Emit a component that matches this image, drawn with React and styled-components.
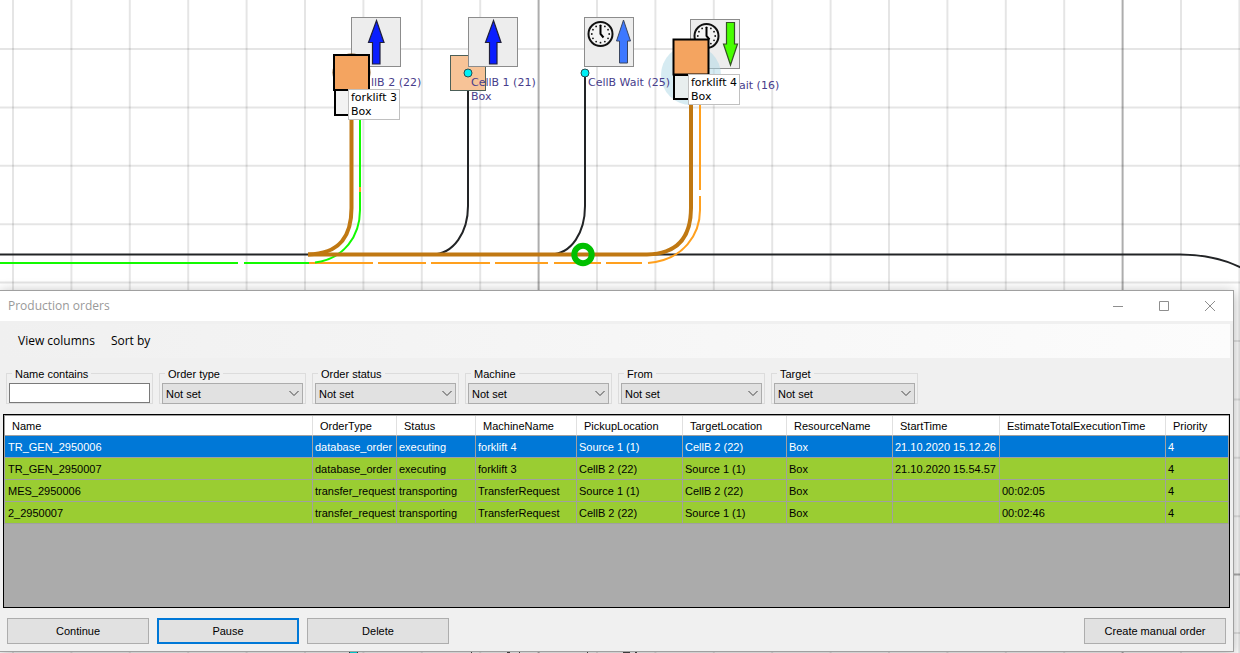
import React, { useState } from "react";
import styled, { createGlobalStyle, css } from "styled-components";

const uiFont = '"Liberation Sans", Arial, sans-serif';
const titleFont = '"Open Sans", "Noto Sans", sans-serif';
const mapFont = '"DejaVu Sans", Verdana, sans-serif';

const GlobalStyle = createGlobalStyle`
  * { box-sizing: border-box; }
  html, body, #root { height: 100%; }
  body { margin: 0; overflow: hidden; background: #fff; font: 11px/14px ${uiFont}; color: #000; }
  button, input, select { font: inherit; color: inherit; }
`;

const Desktop = styled.main`
  position: relative;
  height: 100%;
  overflow: hidden;
`;

/* ---------- plant map ---------- */

const MapCanvas = styled.div`
  position: absolute;
  inset: 0;
  font: 11px/14px ${mapFont};
`;

const MapDrawing = styled.svg`
  display: block;
  width: 100%;
  height: 100%;
`;

const MapLabel = styled.div`
  position: absolute;
  left: ${(p) => p.$x}px;
  top: ${(p) => p.$y}px;
  white-space: pre;
  color: #483d8b;
`;

const VehicleTag = styled(MapLabel)`
  padding: 1px 2px 0;
  border: 1px solid #c0c0c0;
  background: #fff;
  color: #000;
`;

const PITCH = 58.4;
const verticals = Array.from({ length: 40 }, (_, i) => 13 + i * PITCH);
const horizontals = Array.from({ length: 24 }, (_, i) => -9.4 + i * PITCH);

function Grid() {
  return (
    <g stroke="#000" strokeWidth="2">
      {verticals.map((x, i) => (
        <line key={`v${i}`} x1={x} x2={x} y1="0" y2="1400" strokeOpacity={i % 10 === 9 ? 0.32 : 0.1} />
      ))}
      {horizontals.map((y, i) => (
        <line key={`h${i}`} x1="0" x2="2600" y1={y} y2={y} strokeOpacity={i % 10 === 0 && i > 0 ? 0.32 : 0.1} />
      ))}
    </g>
  );
}

function Tile({ x, y, children }) {
  return (
    <g transform={`translate(${x} ${y})`}>
      <rect x="0.5" y="0.5" width="49" height="49" fill="#ededed" stroke="#8c8c8c" />
      {children}
    </g>
  );
}

function BlueArrow() {
  return <path d="M25.500 3.500L33 25.500H29V47H21.500V25.500H17.500Z" fill="#0a1eff" stroke="#20203c" strokeWidth="1.200" />;
}

function Clock() {
  const ticks = Array.from({ length: 12 }, (_, i) => (i * Math.PI) / 6);
  return (
    <g>
      <circle cx="16.500" cy="17" r="12" fill="#f4f4f4" stroke="#111" strokeWidth="2" />
      {ticks.map((a) => (
        <circle key={a} cx={16.5 + 8.7 * Math.sin(a)} cy={17 - 8.7 * Math.cos(a)} r="0.900" fill="#111" />
      ))}
      <path d="M16.500 8V17L19.500 20.500" fill="none" stroke="#000" strokeWidth="2" />
    </g>
  );
}

function PlantMap() {
  return (
    <MapCanvas>
      <MapDrawing aria-hidden="true">
        <Grid />
        <g fill="none" stroke="#222426" strokeWidth="2">
          <path d="M0 254.500H1180C1206 254.500 1226 260 1242 268" />
          <path d="M468 74V206C468 232 454 254 432 254.500" />
          <path d="M585 74V206C585 232 572 254 550 254.500" />
        </g>
        <path d="M314 263H373M378 263H426M431 263H490M495 263H548M554 263H601M606 263H642M648 263C684 260 700 234 700 210V196M700 190V100" fill="none" stroke="#ffa01e" strokeWidth="2" />
        <path d="M309 263H315M360 192V187" stroke="#ff9a1e" strokeWidth="2" />
        <path d="M0 263H238M244 263H309M315 262.500C344 259 360 236 360 210V192M360 187V110" fill="none" stroke="#12fa00" strokeWidth="2" />
        <path d="M308 254.500H647C679 254 691 236 691 208V90" fill="none" stroke="#c07812" strokeWidth="4" />
        <path d="M308 254.500C340 254 351.500 236 351.500 208V90" fill="none" stroke="#c07812" strokeWidth="4" />
        <circle cx="583" cy="254.500" r="8.700" fill="none" stroke="#00c000" strokeWidth="6" />

        <rect x="450.500" y="55.500" width="35" height="35" fill="#f7c397" stroke="#4c5f58" />

        <Tile x={351} y={17}><BlueArrow /></Tile>
        <Tile x={468} y={17}><BlueArrow /></Tile>
        <Tile x={584} y={17}>
          <Clock />
          <path d="M39.500 3L46.500 24H43.500V46H35.500V24H32.500Z" fill="#3d78ff" stroke="#3a4660" strokeWidth="1" />
        </Tile>
        <Tile x={690} y={19}>
          <Clock />
          <path d="M36.500 3.500H44.500V25H47.500L40.500 46L33.500 25H36.500Z" fill="#48ff00" stroke="#335522" strokeWidth="1.200" />
        </Tile>
        <circle cx="691" cy="75" r="30" fill="#add8e6" fillOpacity="0.500" />

        <g fill="#00f0f5" stroke="#2a4c50">
          <circle cx="468" cy="73" r="4" />
          <circle cx="585" cy="73" r="4" />
          <rect x="349.500" y="645.500" width="8" height="8" />
        </g>
        <g fill="#4a4a4a">
          <rect x="471" y="650" width="1" height="12" />
          <rect x="507" y="650" width="3" height="12" />
          <rect x="519" y="650" width="1" height="12" />
          <rect x="587" y="650" width="1" height="12" />
          <rect x="623" y="650" width="7" height="12" />
          <rect x="635" y="650" width="2" height="12" />
        </g>

        <circle cx="351.500" cy="72.500" r="19" fill="#7a4a10" />
        <g stroke="#000" strokeWidth="2">
          <rect x="335" y="90" width="32" height="25" fill="#f2f2f2" />
          <rect x="334" y="55" width="35" height="35" fill="#f4a460" />
          <rect x="674" y="75" width="32" height="24" fill="#e8eeee" />
          <rect x="673.500" y="39.500" width="35" height="35" fill="#f4a460" />
        </g>
      </MapDrawing>
      <MapLabel $x={371} $y={76}>llB 2 (22)</MapLabel>
      <MapLabel $x={471} $y={76}>{"CellB 1 (21)\nBox"}</MapLabel>
      <MapLabel $x={588} $y={76}>CellB Wait (25)</MapLabel>
      <MapLabel $x={739} $y={79}>ait (16)</MapLabel>
      <VehicleTag $x={348} $y={89}>{"forklift 3\nBox"}</VehicleTag>
      <VehicleTag $x={688} $y={74}>{"forklift 4\nBox"}</VehicleTag>
    </MapCanvas>
  );
}

/* ---------- production orders window ---------- */

const Window = styled.section`
  position: absolute;
  left: 0;
  right: 6px;
  top: 290px;
  bottom: 1px;
  display: flex;
  flex-direction: column;
  border: solid #a0a0a0;
  border-width: 1px 1px 1px 0;
  background: #f0f0f0;
  box-shadow: 0 2px 12px rgba(0, 0, 0, 0.3);
`;

const TitleBar = styled.header`
  display: flex;
  justify-content: space-between;
  align-items: center;
  height: 30px;
  padding: 0 0 0 8px;
  background: #fff;
  color: #999;
`;

const Title = styled.h1`
  margin: 0;
  font: 12px/16px ${titleFont};
`;

const WindowControls = styled.div`
  display: flex;
`;

const WindowButton = styled.button`
  display: grid;
  place-items: center;
  width: 46px;
  height: 28px;
  padding: 0;
  border: 0;
  background: none;

  svg { fill: none; stroke: #8e8e8e; }
`;

const MenuBar = styled.nav`
  display: flex;
  align-items: center;
  gap: 16px;
  height: 34px;
  margin: 3px 3px 0 0;
  padding: 0 18px;
  background: linear-gradient(90deg, #f0f0f0, #fcfcfc);
`;

const MenuButton = styled.button`
  padding: 0;
  border: 0;
  background: none;
  font: 12px/16px ${titleFont};
`;

const Filters = styled.form`
  display: flex;
  gap: 6px;
  padding: 9px 6px 0;
`;

const FilterGroup = styled.div`
  display: flex;
  flex-direction: column;
  width: 147px;
  height: 37px;
  position: relative;
  padding: 16px 3px 0;

  &::before {
    content: "";
    position: absolute;
    inset: 6px 0 0;
    border: 1px solid #dcdcdc;
  }
`;

const FilterLabel = styled.label`
  position: absolute;
  top: 0;
  left: 6px;
  padding: 0 3px;
  background: #f0f0f0;
`;

const NameInput = styled.input`
  position: relative;
  width: 100%;
  height: 20px;
  border: 1px solid #7a7a7a;
  background: #fff;
`;

const SelectBox = styled.div`
  position: relative;

  svg {
    position: absolute;
    right: 4px;
    top: 7px;
    fill: none;
    stroke: #444;
    pointer-events: none;
  }
`;

const Select = styled.select`
  appearance: none;
  display: block;
  width: 100%;
  height: 21px;
  padding: 0 18px 0 3px;
  border: 1px solid #acacac;
  border-radius: 0;
  background: #e1e1e1;
`;

const TableFrame = styled.div`
  flex: 1;
  min-height: 0;
  margin: 10px 3px 0;
  border: 1px solid #000;
  background: #ababab;
  overflow: hidden;
`;

const Table = styled.table`
  width: 100%;
  table-layout: fixed;
  border-collapse: separate;
  border-spacing: 0;
  border: solid #a0a0a0;
  border-width: 1px 0 0 1px;
`;

const cell = css`
  white-space: nowrap;
  text-align: left;
  font-weight: normal;
`;

const HeadCell = styled.th`
  ${cell}
  height: 20px;
  padding: 0 7px;
  border-right: 1px solid #e0e0e0;
  border-bottom: 1px solid #a0a0a0;
  background: #fff;
`;

const Cell = styled.td`
  ${cell}
  height: 22px;
  padding: 0 0 0 2px;
  border-right: 1px solid #a0a0a0;
  border-bottom: 1px solid #a0a0a0;

  &:first-child { padding-left: 3px; }
`;

const Row = styled.tr`
  background: ${(p) => (p.$selected ? "#0078d7" : "#9acd32")};
  color: ${(p) => (p.$selected ? "#fff" : "#000")};
`;

const Actions = styled.footer`
  display: flex;
  gap: 8px;
  padding: 10px 7px 7px;
`;

const ActionButton = styled.button`
  width: 142px;
  height: 26px;
  padding: 0;
  border: ${(p) => (p.$focused ? "2px solid #0078d7" : "1px solid #adadad")};
  background: #e1e1e1;
  margin-left: ${(p) => (p.$end ? "auto" : "0")};
`;

const columns = [
  ["Name", 308],
  ["OrderType", 84],
  ["Status", 79],
  ["MachineName", 101],
  ["PickupLocation", 106],
  ["TargetLocation", 104],
  ["ResourceName", 106],
  ["StartTime", 107],
  ["EstimateTotalExecutionTime", 166],
  ["Priority", 63],
];

const orders = [
  ["TR_GEN_2950006", "database_order", "executing", "forklift 4", "Source 1 (1)", "CellB 2 (22)", "Box", "21.10.2020 15.12.26", "", "4"],
  ["TR_GEN_2950007", "database_order", "executing", "forklift 3", "CellB 2 (22)", "Source 1 (1)", "Box", "21.10.2020 15.54.57", "", "4"],
  ["MES_2950006", "transfer_request", "transporting", "TransferRequest", "Source 1 (1)", "CellB 2 (22)", "Box", "", "00:02:05", "4"],
  ["2_2950007", "transfer_request", "transporting", "TransferRequest", "CellB 2 (22)", "Source 1 (1)", "Box", "", "00:02:46", "4"],
];

const filters = ["Order type", "Order status", "Machine", "From", "Target"];

function SelectFilter({ label }) {
  const id = label.toLowerCase().replace(" ", "-");
  return (
    <FilterGroup>
      <FilterLabel htmlFor={id}>{label}</FilterLabel>
      <SelectBox>
        <Select id={id}>
          <option>Not set</option>
        </Select>
        <svg width="10" height="7"><path d="M0.500 1L5 5.500L9.500 1" /></svg>
      </SelectBox>
    </FilterGroup>
  );
}

export default function App() {
  const [selected, setSelected] = useState(0);
  return (
    <Desktop>
      <GlobalStyle />
      <PlantMap />
      <Window aria-label="Production orders">
        <TitleBar>
          <Title>Production orders</Title>
          <WindowControls>
            <WindowButton aria-label="Minimize">
              <svg width="10" height="10"><path d="M0 5.500H10" /></svg>
            </WindowButton>
            <WindowButton aria-label="Maximize">
              <svg width="10" height="10"><path d="M0.500 0.500H9.500V9.500H0.500Z" /></svg>
            </WindowButton>
            <WindowButton aria-label="Close">
              <svg width="10" height="10"><path d="M0 0L10 10M10 0L0 10" /></svg>
            </WindowButton>
          </WindowControls>
        </TitleBar>
        <MenuBar>
          <MenuButton>View columns</MenuButton>
          <MenuButton>Sort by</MenuButton>
        </MenuBar>
        <Filters>
          <FilterGroup>
            <FilterLabel htmlFor="name-contains">Name contains</FilterLabel>
            <NameInput id="name-contains" type="text" />
          </FilterGroup>
          {filters.map((f) => <SelectFilter key={f} label={f} />)}
        </Filters>
        <TableFrame>
          <Table>
            <colgroup>
              {columns.map(([name, w]) => <col key={name} width={w} />)}
            </colgroup>
            <thead>
              <tr>{columns.map(([name]) => <HeadCell key={name} scope="col">{name}</HeadCell>)}</tr>
            </thead>
            <tbody>
              {orders.map((order, r) => (
                <Row key={order[0]} $selected={r === selected} onClick={() => setSelected(r)}>
                  {order.map((value, c) => <Cell key={c}>{value}</Cell>)}
                </Row>
              ))}
            </tbody>
          </Table>
        </TableFrame>
        <Actions>
          <ActionButton>Continue</ActionButton>
          <ActionButton $focused>Pause</ActionButton>
          <ActionButton>Delete</ActionButton>
          <ActionButton $end>Create manual order</ActionButton>
        </Actions>
      </Window>
    </Desktop>
  );
}
